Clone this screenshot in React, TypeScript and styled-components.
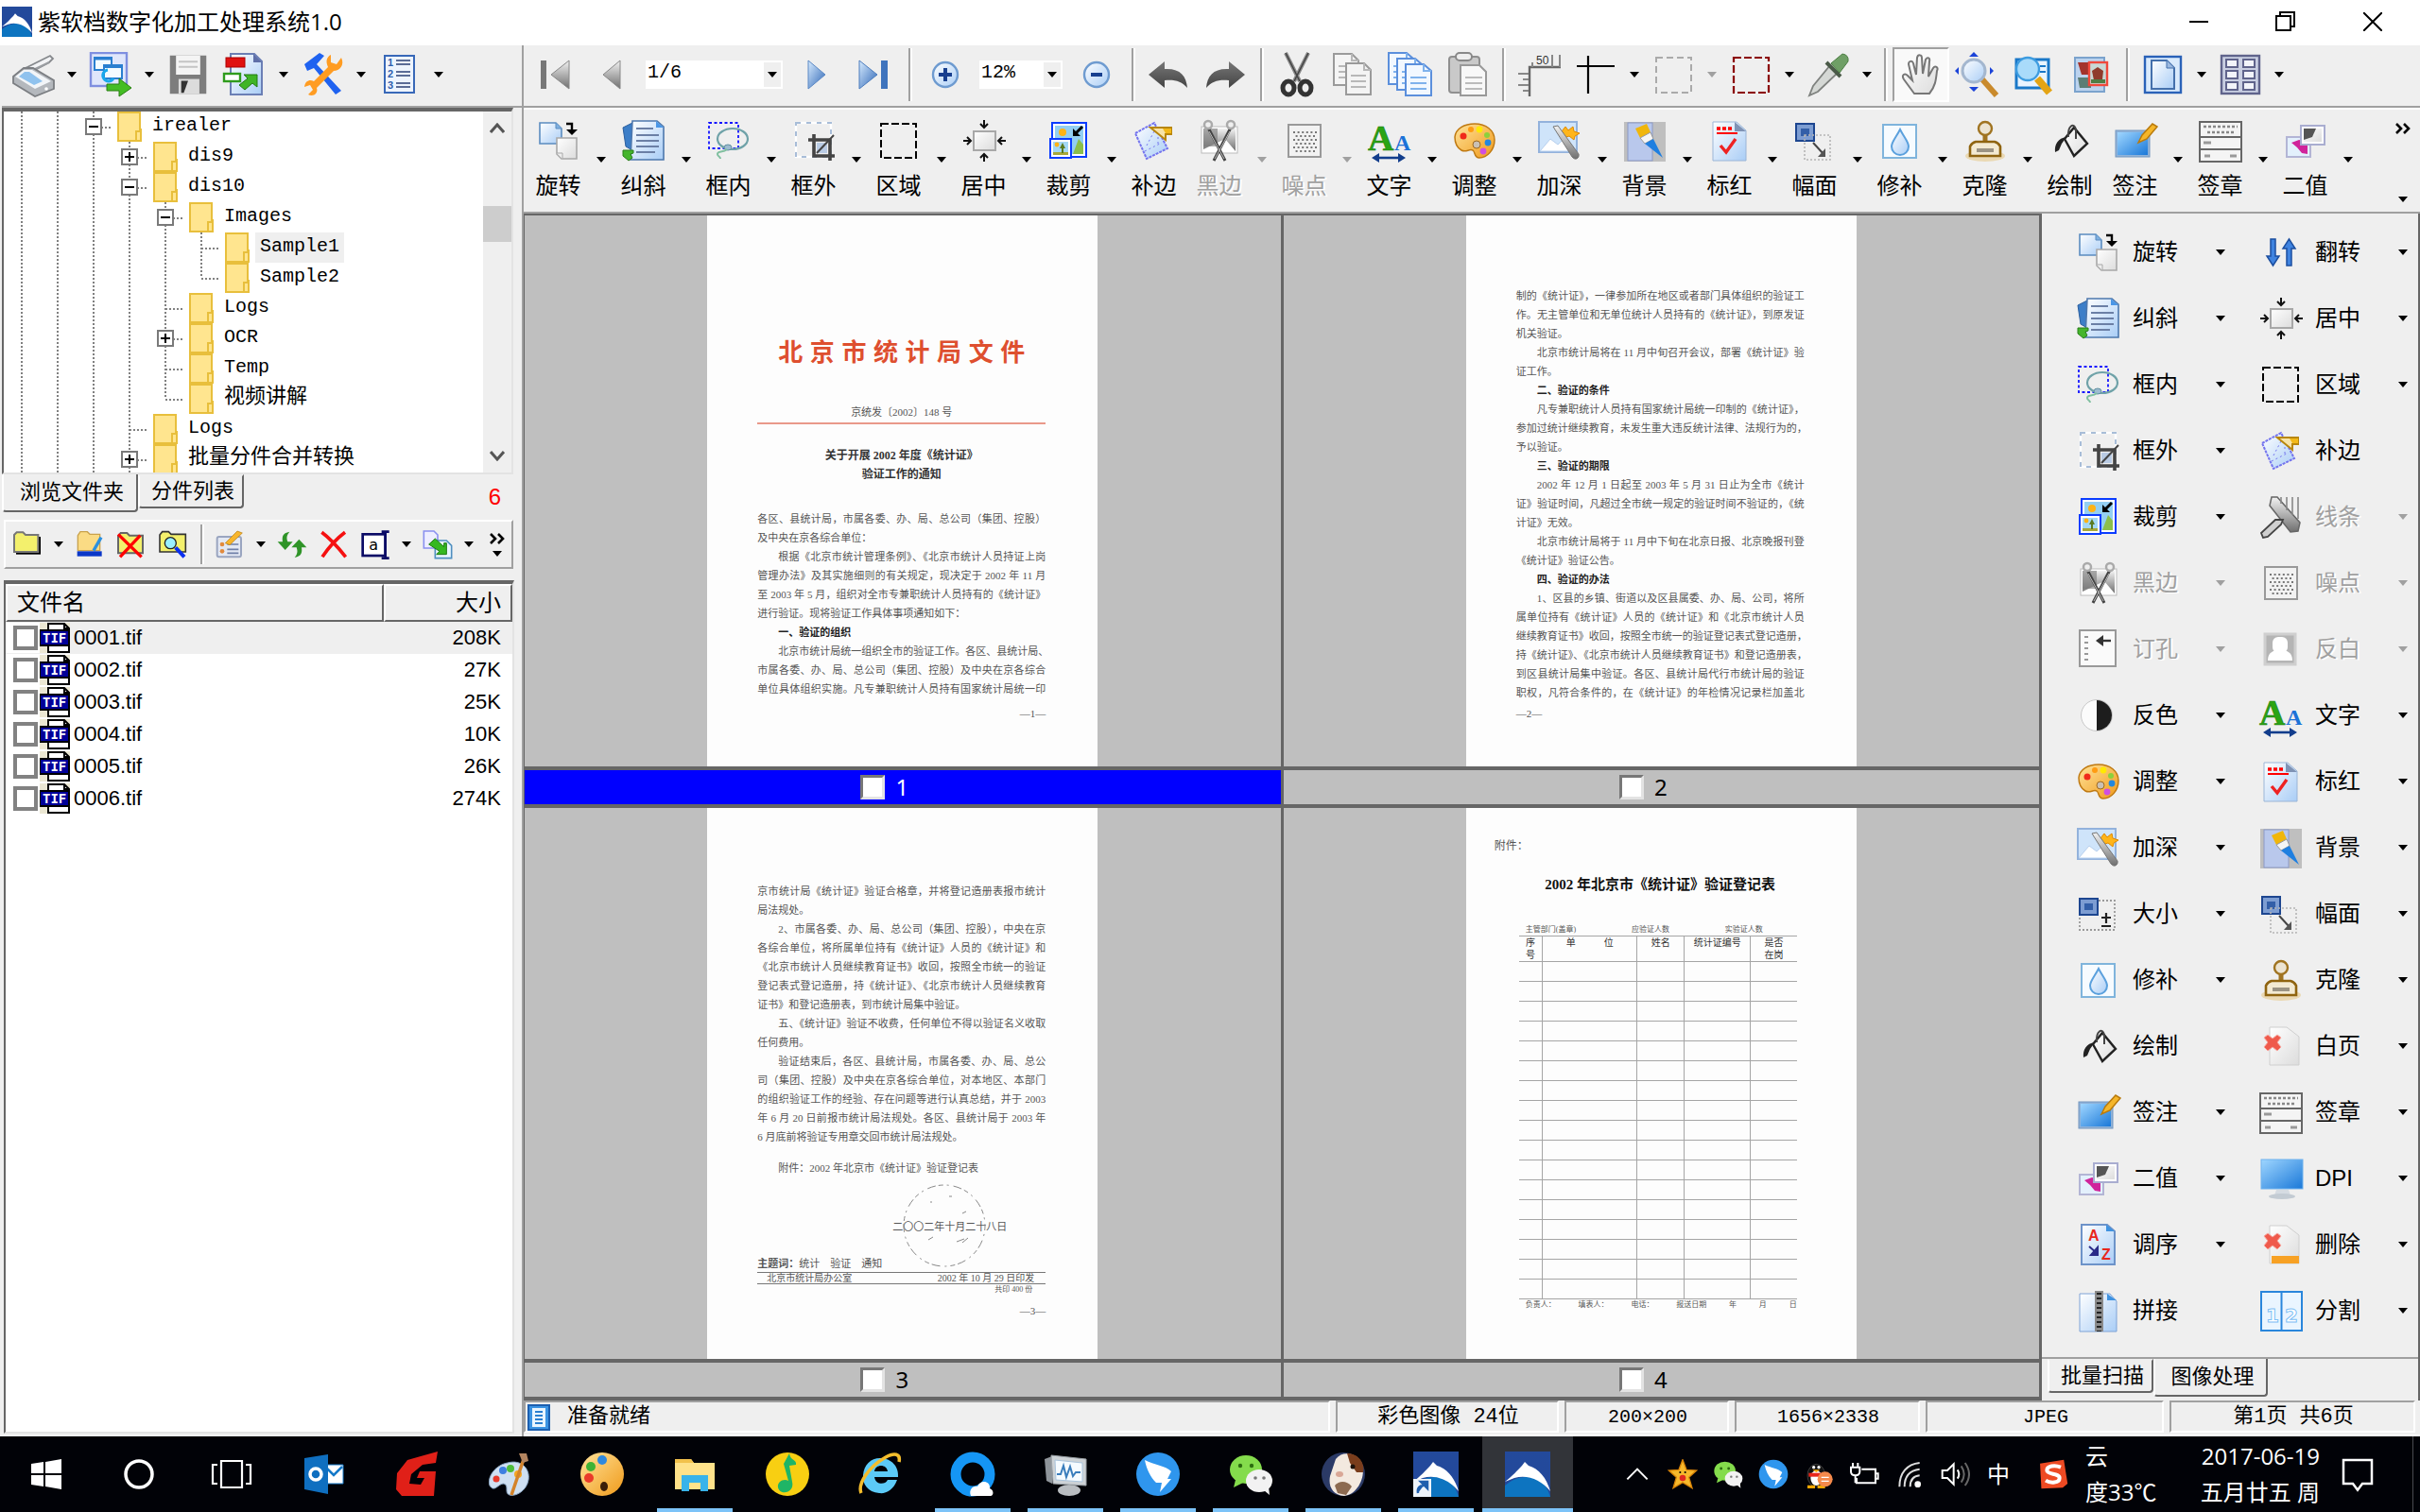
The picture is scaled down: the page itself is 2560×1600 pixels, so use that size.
import React from "react";
import styled, { createGlobalStyle, css } from "styled-components";

const UI = `"Liberation Sans", "Noto Sans CJK SC", sans-serif`;
const MONO = `"Liberation Mono", "Noto Sans CJK SC", monospace`;
const SERIF = `"Liberation Serif", "Noto Sans CJK SC", serif`;
const SEGOE = `"Open Sans", "Noto Sans CJK SC", sans-serif`;

const face = "#efefef";
const shade = "#a0a0a0";
const dark = "#666666";

const GlobalStyle = createGlobalStyle`
  * { box-sizing: border-box; }
  body { margin: 0; background: ${face}; color: #000; font-family: ${UI}; overflow: hidden; }
  button, select, input { font-family: inherit; color: inherit; margin: 0; }
  svg { display: block; flex: none; }
`;

/* ---------- shell ---------- */

const Shell = styled.div`
  height: 100vh;
  display: flex;
  flex-direction: column;
`;

const TitleBar = styled.header`
  flex: none;
  height: 48px;
  background: #fff;
  display: flex;
  align-items: center;
  padding: 0 4px 2px 2px;
`;

const Title = styled.h1`
  margin: 0 0 0 6px;
  flex: 1;
  font: 400 24px/32px ${SEGOE};
`;

const PlainButton = styled.button`
  border: 0;
  padding: 0;
  background: transparent;
  display: flex;
  align-items: center;
  justify-content: center;
  flex: none;
`;

const CaptionButton = styled(PlainButton)`
  width: 92px;
  height: 44px;
`;

const Main = styled.main`
  flex: 1;
  min-height: 0;
  display: flex;
`;

const LeftPane = styled.aside`
  width: 552px;
  flex: none;
  display: flex;
  flex-direction: column;
  padding-left: 2px;
  min-height: 0;
`;

const WorkPane = styled.section`
  flex: 1;
  min-width: 0;
  display: flex;
  flex-direction: column;
  border-left: 2px solid ${shade};
`;

/* ---------- toolbars ---------- */

const ToolBar = styled.div`
  flex: none;
  display: flex;
  align-items: center;
  height: 66px;
  padding: 0 0 2px 3px;
  border-bottom: 2px solid ${shade};
`;

const ToolButton = styled(PlainButton)<{ $w?: number }>`
  width: ${(p) => p.$w ?? 60}px;
  height: 58px;
  &[aria-pressed="true"] {
    background: #f9f9f9;
    border: 2px solid #fff;
    border-top-color: ${shade};
    border-left-color: ${shade};
  }
`;

const DropButton = styled(PlainButton)`
  width: 22px;
  height: 30px;
`;

const Divider = styled.span`
  flex: none;
  width: 2px;
  height: 56px;
  margin: 0 7px;
  background: ${shade};
  box-shadow: 2px 0 #fff;
`;

const Combo = styled.label<{ $w: number }>`
  width: ${(p) => p.$w}px;
  height: 30px;
  margin: 0 6px;
  background: #fff;
  display: flex;
  align-items: center;
  flex: none;
  padding-right: 2px;
`;

const ComboSelect = styled.select`
  appearance: none;
  border: 0;
  background: transparent;
  flex: 1;
  min-width: 0;
  height: 30px;
  padding: 0 2px 4px;
  font: 20px/22px ${MONO};
`;

const ComboArrow = styled.span`
  width: 18px;
  height: 26px;
  background: ${face};
  display: grid;
  place-items: center;
`;

const BigBar = styled.div`
  flex: none;
  height: 110px;
  display: flex;
  border-top: 2px solid #fff;
  padding: 9px 0 0 2px;
`;

const BigItem = styled.div`
  display: flex;
  flex: none;
`;

const disabledText = css`
  color: #a0a0a0;
  text-shadow: 2px 1px #fff;
`;

const BigButton = styled(PlainButton)`
  width: 69px;
  height: 88px;
  flex-direction: column;
  justify-content: flex-start;
  gap: 8px;
  font: 24px/32px ${UI};
  &:disabled { ${disabledText} }
`;

const BigDrop = styled(DropButton)`
  width: 21px;
  height: 88px;
`;

const More = styled(PlainButton)`
  margin-left: auto;
  width: 36px;
  height: 94px;
  flex-direction: column;
  justify-content: space-between;
  padding: 5px 0;
`;

/* ---------- folder tree ---------- */

const Sunken = styled.div`
  border: 2px solid ${dark};
  border-right-color: #e3e3e3;
  border-bottom-color: #e3e3e3;
  background: #fff;
`;

const TreeBox = styled(Sunken)`
  flex: none;
  height: 388px;
  margin-right: 9px;
  display: flex;
  overflow: hidden;
  border-top-width: 4px;
`;

const Tree = styled.ul`
  flex: 1;
  margin: 0;
  padding: 0;
  list-style: none;
`;

const TreeRow = styled.li`
  display: flex;
  height: 32px;
`;

const vDots = "repeating-linear-gradient(180deg, #808080 0 2px, transparent 2px 4px)";
const hDots = "repeating-linear-gradient(90deg, #808080 0 2px, transparent 2px 4px)";

const Guide = styled.span<{ $kind: string }>`
  width: 38px;
  height: 32px;
  flex: none;
  display: grid;
  place-items: center;
  background-image: ${vDots}, ${(p) => (p.$kind === "v" ? "none" : hDots)};
  background-repeat: no-repeat;
  background-size: 2px ${(p) => (p.$kind === "l" ? "16px" : "32px")}, 19px 2px;
  background-position: 18px 0, 19px 16px;
`;

const Expander = styled(PlainButton)`
  width: 18px;
  height: 18px;
  background: #fff;
  border: 2px solid #7a7a7a;
`;

const FolderSlot = styled.span`
  width: 38px;
  flex: none;
  display: grid;
  place-items: center;
`;

const NodeLabel = styled.span<{ $selected?: boolean; $cjk?: boolean }>`
  padding: 0 5px;
  font: ${(p) => (p.$cjk ? 22 : 20)}px/30px ${MONO};
  height: 32px;
  background: ${(p) => (p.$selected ? face : "transparent")};
`;

const ScrollTrack = styled.div`
  width: 30px;
  background: ${face};
  display: flex;
  flex-direction: column;
  align-items: center;
  padding: 12px 0;
`;

const ScrollThumb = styled.div`
  width: 30px;
  height: 38px;
  margin: 76px 0 auto;
  background: #cdcdcd;
`;

/* ---------- tabs ---------- */

const TabStrip = styled.div<{ $right?: boolean }>`
  flex: none;
  display: flex;
  align-items: flex-start;
  height: ${(p) => (p.$right ? 44 : 48)}px;
  padding-left: ${(p) => (p.$right ? 6 : 0)}px;
`;

const Tab = styled.button<{ $active?: boolean; $w: number }>`
  width: ${(p) => p.$w}px;
  height: ${(p) => (p.$active ? 40 : 36)}px;
  padding: 0 0 0 4px;
  font: 22px/32px ${UI};
  background: ${face};
  border: 2px solid #fff;
  border-top: ${(p) => (p.$active ? "0" : `2px solid ${face}`)};
  border-right-color: ${dark};
  border-bottom-color: ${dark};
  border-radius: 0 0 4px 4px;
`;

const TabCount = styled.output`
  margin: 8px 22px 0 auto;
  color: #ff0000;
  font: 24px/32px ${UI};
`;

/* ---------- file list ---------- */

const FileBar = styled.div`
  flex: none;
  display: flex;
  align-items: center;
  height: 52px;
  margin: 0 9px 12px 2px;
  padding-left: 1px;
  border: 2px solid #fff;
  border-right-color: ${shade};
  border-bottom-color: ${shade};
`;

const FileButton = styled(ToolButton)`
  height: 46px;
`;

const FileDivider = styled(Divider)`
  height: 42px;
`;

const FileMore = styled(PlainButton)`
  width: 30px;
  height: 40px;
  margin-left: auto;
  flex-direction: column;
  gap: 7px;
`;

const FileBox = styled(Sunken)`
  flex: 1;
  min-height: 0;
  margin: 0 8px 3px 2px;
  border-top-width: 4px;
`;

const FileTable = styled.table`
  width: 100%;
  border-collapse: separate;
  border-spacing: 0;
  table-layout: fixed;
  font: 22px/32px ${UI};
`;

const HeadCell = styled.th<{ $right?: boolean }>`
  width: ${(p) => (p.$right ? "136px" : "auto")};
  height: 40px;
  padding: 0 10px;
  font: 400 24px/32px ${UI};
  text-align: ${(p) => (p.$right ? "right" : "left")};
  background: ${face};
  border: 2px solid ${dark};
  border-top-color: #fff;
  border-left-color: #fff;
`;

const FileRow = styled.tr<{ $selected?: boolean }>`
  background: ${(p) => (p.$selected ? face : "#fff")};
`;

const NameCell = styled.td`
  height: 34px;
  padding: 0;
`;

const SizeCell = styled.td`
  padding: 0 12px 0 0;
  text-align: right;
`;

const FileLabel = styled.label`
  display: flex;
  align-items: center;
  padding-left: 8px;
  background: linear-gradient(90deg, #fff 0 68px, transparent 68px);
`;

const FileCheck = styled.input`
  appearance: none;
  width: 26px;
  height: 26px;
  border: 4px solid #828282;
  background: #fff;
  margin-right: 2px;
  flex: none;
`;

const FileName = styled.span`
  margin-left: 4px;
`;

/* ---------- thumbnails ---------- */

const Center = styled.div`
  flex: 1;
  min-height: 0;
  display: flex;
  border-top: 2px solid ${shade};
`;

const Viewer = styled.div`
  flex: 1;
  min-width: 0;
  display: grid;
  grid-template-columns: 1fr 1fr;
  grid-template-rows: 1fr 1fr;
  column-gap: 3px;
  background: ${dark};
  border-top: 2px solid ${dark};
  border-right: 3px solid ${dark};
  border-left: 1px solid ${dark};
`;

const Thumb = styled.figure`
  margin: 0;
  min-height: 0;
  display: flex;
  flex-direction: column;
`;

const ThumbStage = styled.div`
  flex: 1;
  min-height: 0;
  background: #bfbfbf;
  display: flex;
  justify-content: center;
`;

const ThumbCaption = styled.figcaption<{ $active?: boolean }>`
  flex: none;
  height: 44px;
  border: 4px solid ${dark};
  border-width: 4px 0;
  background: ${(p) => (p.$active ? "#0000ff" : "#bfbfbf")};
  color: ${(p) => (p.$active ? "#fff" : "#000")};
  display: flex;
  justify-content: center;
  font: 24px/36px "Noto Sans", sans-serif;
`;

const ThumbLabel = styled.label`
  display: flex;
  align-items: center;
  gap: 11px;
  padding-right: 38px;
`;

const ThumbCheck = styled.input`
  appearance: none;
  width: 26px;
  height: 26px;
  background: #fff;
  border: 3px solid #e3e3e3;
  border-top-color: #777;
  border-left-color: #777;
`;

const Sheet = styled.article<{ $top: number }>`
  height: 100%;
  aspect-ratio: 1656 / 2338;
  background: #fdfdfd;
  padding: ${(p) => p.$top}px 55px 0 53px;
  overflow: hidden;
  color: #555;
  font: 11px/20px ${SERIF};
`;

const Line = styled.p<{ $indent?: boolean; $full?: boolean; $bold?: boolean }>`
  margin: 0;
  height: 20px;
  white-space: nowrap;
  padding-left: ${(p) => (p.$indent ? 22 : 0)}px;
  font-weight: ${(p) => (p.$bold ? 700 : 400)};
  color: ${(p) => (p.$bold ? "#222" : "inherit")};
  text-align-last: ${(p) => (p.$full ? "justify" : "left")};
`;

const RedTitle = styled.h2`
  margin: 0 22px 32px;
  color: #de4f2f;
  font: 700 26px/40px ${SERIF};
  text-align-last: justify;
`;

const DocNumber = styled.p`
  margin: 0;
  padding-bottom: 1px;
  text-align: center;
  border-bottom: 2px solid #e9998a;
`;

const DocHeading = styled.h3`
  margin: 23px 0 27px;
  color: #333;
  font: 700 12px/20px ${SERIF};
  text-align: center;
`;

const PageNo = styled.p<{ $left?: boolean }>`
  margin: ${(p) => (p.$left ? 2 : 6)}px 0 0;
  text-align: ${(p) => (p.$left ? "left" : "right")};
`;

const Attachment = styled.p`
  margin: 13px 0 0 22px;
`;

const Signed = styled.div`
  position: relative;
  height: 62px;
  padding: 42px 41px 0 0;
  text-align: right;
`;

const Seal = styled.svg`
  position: absolute;
  top: 6px;
  right: 62px;
`;

const Keywords = styled.p`
  margin: 20px 0 0;
  line-height: 18px;
  white-space: pre;
`;

const Imprint = styled.div`
  display: flex;
  justify-content: space-between;
  padding: 0 12px 0 10px;
  border: 1px solid #777;
  border-width: 1px 0;
  font-size: 10px;
  line-height: 11px;
`;

const Copies = styled.p`
  margin: 0 14px;
  font-size: 8px;
  line-height: 12px;
  text-align: right;
`;

const FormLabel = styled.p`
  margin: 0 0 0 -23px;
  font-size: 12px;
`;

const FormTitle = styled.h2`
  margin: 19px 0 30px;
  text-align: center;
  white-space: nowrap;
  color: #111;
  font: 700 15px/24px ${SERIF};
`;

const FormLine = styled.div<{ $end: number }>`
  display: flex;
  justify-content: space-between;
  margin: 0 ${(p) => p.$end}px 0 10px;
  font-size: 8px;
  line-height: 12px;
  white-space: nowrap;
`;

const FormTable = styled.table`
  width: 294px;
  margin-left: 3px;
  border-collapse: collapse;
  table-layout: fixed;
  text-align: center;
  font-size: 10px;
  line-height: 13px;
  color: #333;
  td, th { padding: 0; height: 21px; border: 1px solid #a5a5a5; font-weight: 400; vertical-align: top; }
  th { height: 27px; }
  td:first-child, th:first-child { border-left: 0; }
  td:last-child, th:last-child { border-right: 0; }
`;

/* ---------- processing panel ---------- */

const SidePanel = styled.aside`
  width: 400px;
  flex: none;
  display: flex;
  flex-direction: column;
  border-right: 2px solid ${dark};
`;

const ToolGrid = styled.div`
  flex: 1;
  display: grid;
  grid-template-columns: 193px 1fr;
  grid-auto-rows: 70px;
  padding: 6px 0 0 36px;
  border-bottom: 2px solid ${shade};
`;

const SideItem = styled.div`
  display: flex;
  align-items: center;
`;

const SideButton = styled(PlainButton)`
  width: 142px;
  height: 60px;
  gap: 12px;
  justify-content: flex-start;
  font: 24px/32px ${UI};
  &:disabled { ${disabledText} }
`;

/* ---------- status bar ---------- */

const StatusBar = styled.footer`
  flex: none;
  display: flex;
  gap: 6px;
  height: 38px;
  padding: 0 5px 2px 0;
  border-bottom: 2px solid #fff;
`;

const StatusCell = styled.div<{ $w?: number; $cjk?: boolean }>`
  ${(p) => (p.$w ? `width: ${p.$w}px; justify-content: center; padding-left: 2px;` : "flex: 1; gap: 18px; padding-left: 2px;")}
  display: flex;
  align-items: center;
  padding-top: 2px;
  white-space: pre;
  font: ${(p) => (p.$cjk ? 22 : 20)}px/30px ${MONO};
  border: 2px solid #fff;
  border-top-color: ${shade};
  border-left-color: ${shade};
`;

/* ---------- taskbar ---------- */

const TaskBar = styled.nav`
  flex: none;
  height: 80px;
  background: #010207;
  color: #fff;
  display: flex;
  align-items: stretch;
`;

const running = "linear-gradient(#7cc3f8, #7cc3f8)";

const TaskButton = styled(PlainButton)<{ $open?: boolean; $active?: boolean }>`
  width: ${(p) => (p.$active ? 96 : 98)}px;
  background: ${(p) => (p.$open || p.$active ? running : "none")} no-repeat bottom;
  background-size: ${(p) => (p.$active ? "100%" : "80px")} 4px;
  background-color: ${(p) => (p.$active ? "#323439" : "transparent")};
`;

const Tray = styled.div`
  margin-left: auto;
  display: flex;
  align-items: center;
`;

const TrayButton = styled(PlainButton)`
  width: 48px;
  height: 80px;
`;

const TrayText = styled.div<{ $w: number; $right?: boolean }>`
  width: ${(p) => p.$w}px;
  padding: ${(p) => (p.$right ? "0 16px 0 0" : "0 0 0 10px")};
  text-align: ${(p) => (p.$right ? "right" : "left")};
  white-space: nowrap;
  font: 24px/38px ${SEGOE};
`;

const ShowDesktop = styled.span`
  width: 8px;
  height: 80px;
  margin-left: 34px;
  border-left: 1px solid #4a4b50;
`;

/* ---------- drawings ---------- */

const HiddenSvg = styled.svg`
  position: absolute;
`;

const Defs = () => (
  <HiddenSvg width="0" height="0" aria-hidden="true">
    <defs>
      <linearGradient id="ice" x1="0" y1="0" x2="1" y2="1"><stop offset="0" stopColor="#fff" /><stop offset="1" stopColor="#a9cdf6" /></linearGradient>
      <linearGradient id="sky" x1="0" y1="0" x2="1" y2="1"><stop offset="0" stopColor="#9fd6ff" /><stop offset="1" stopColor="#1a78d8" /></linearGradient>
      <linearGradient id="steel" x1="0" y1="0" x2="0" y2="1"><stop offset="0" stopColor="#f2f2f2" /><stop offset="1" stopColor="#6f6f6f" /></linearGradient>
      <linearGradient id="navy" x1="0" y1="0" x2="1" y2="1"><stop offset="0" stopColor="#d8ecff" /><stop offset="1" stopColor="#2d65b5" /></linearGradient>
      <linearGradient id="paper" x1="0" y1="0" x2="1" y2="1"><stop offset="0" stopColor="#fff" /><stop offset="1" stopColor="#dcdcdc" /></linearGradient>
      <linearGradient id="gold" x1="0" y1="0" x2="1" y2="1"><stop offset="0" stopColor="#ffe39a" /><stop offset="1" stopColor="#f09a1a" /></linearGradient>
      <linearGradient id="ink" x1="0" y1="0" x2="0" y2="1"><stop offset="0" stopColor="#777" /><stop offset="1" stopColor="#444" /></linearGradient>
      <linearGradient id="logo" x1="0" y1="0" x2="0" y2="1"><stop offset="0" stopColor="#234a9b" /><stop offset="1" stopColor="#23479b" /></linearGradient>
    </defs>
  </HiddenSvg>
);

const ArrowMark = ({ off }: { off?: boolean }) => (
  <svg width="10" height="6" viewBox="0 0 10 6" aria-hidden="true"><path d="M0 0H10L5 6Z" fill={off ? "#a0a0a0" : "#000"} /></svg>
);

const Chevrons = () => (
  <svg width="16" height="12" viewBox="0 0 16 12" fill="none" stroke="#000" strokeWidth="2.6" aria-hidden="true"><path d="M1 1l5 5-5 5M9 1l5 5-5 5" /></svg>
);

const paletteArt = (
  <>
    <path d="M24 6c12 0 21 7 21 17 0 11-8 19-16 19-6 0-4-6-7-8-4-2-7 3-12 0C5 31 3 26 3 20 4 11 13 6 24 6Z" fill="url(#gold)" stroke="#c07a12" strokeWidth="1.5" />
    <circle cx="26" cy="28" r="4" fill="#c9c0b5" stroke="#a06a20" />
    <circle cx="12" cy="19" r="3.5" fill="#f02a1a" /><circle cx="20" cy="12" r="3" fill="#ff9b12" /><circle cx="29" cy="12" r="3.4" fill="#ffe900" />
    <circle cx="37" cy="18" r="3" fill="#8bd13c" /><circle cx="38" cy="26" r="3.4" fill="#2387dd" /><circle cx="33" cy="35" r="3.4" fill="#cf4fe0" />
  </>
);

const crumpled = (
  <path d="M12 4H30L43 14V44H12Z" fill="url(#paper)" stroke="#cfcfcf" />
);

const redCross = <path d="M6 15l4-3 5 4 5-4 4 3-4 5 4 5-4 4-5-4-5 4-4-4 4-5Z" fill="#ef5a4c" stroke="#f7a79f" />;

const scissorsPhoto = (
  <>
    <rect x="5" y="9" width="38" height="28" fill="#fff" stroke="#bbb" />
    <path d="M7 11H41V35L30 22 7 33Z" fill="url(#steel)" />
    <path d="M7 11H22V30H7Z" fill="#777" opacity=".6" />
    <path d="M12 10L30 45M36 10L18 45" stroke="#444" strokeWidth="3" />
    <path d="M13 14L29 43M35 14L19 43" stroke="#bbb" strokeWidth="1" />
    <circle cx="12" cy="7" r="4" fill="#efefef" stroke="#aaa" strokeWidth="2.5" /><circle cx="36" cy="7" r="4" fill="#efefef" stroke="#aaa" strokeWidth="2.5" />
  </>
);

const art: Record<string, React.ReactNode> = {
  rotate: (
    <>
      <path d="M4 5H21L27 11V27H4Z" fill="url(#ice)" stroke="#5b8cc0" strokeWidth="1.6" /><path d="M21 5V11H27" fill="#7fb0e0" stroke="#5b8cc0" />
      <path d="M22 21H43V43H27L22 38Z" fill="url(#paper)" stroke="#a8a8a8" strokeWidth="1.6" /><path d="M22 37H28V43" fill="#eee" stroke="#a8a8a8" />
      <path d="M32 6H38V14" fill="none" stroke="#000" strokeWidth="2.4" /><path d="M32 12H44L38 18Z" />
    </>
  ),
  deskew: (
    <>
      <path d="M2 10L14 4 12 34 5 30Z" fill="#3c7ec8" stroke="#2a5e9e" />
      <path d="M12 3H38L45 9V44H10Z" fill="url(#ice)" stroke="#4e78ad" strokeWidth="1.6" /><path d="M37 3V10H45" fill="#4a96e6" />
      <path d="M16 11H34M16 18H40M16 24H40M16 30H40M16 36H36" stroke="#6b7fa5" strokeWidth="2" />
      <path d="M2 34H13V37L10 38 12 42 8 45 2 40Z" fill="#45b52c" stroke="#2a7f1b" />
    </>
  ),
  boxin: (
    <>
      <rect x="3" y="5" width="31" height="27" fill="none" stroke="#1414ff" strokeWidth="1.8" strokeDasharray="3 2.5" />
      <ellipse cx="28" cy="22" rx="16" ry="11" fill="none" stroke="#6fa2a8" strokeWidth="2.2" />
      <ellipse cx="23" cy="31" rx="4" ry="3" fill="#9dbbd0" stroke="#5f8fa0" /><path d="M22 33c-4 4-10 1-10 5 0 3 3 2 3 5" fill="none" stroke="#7fbf9f" strokeWidth="2" />
    </>
  ),
  boxout: (
    <>
      <rect x="5" y="5" width="37" height="36" fill="none" stroke="#fff" strokeWidth="2.4" /><rect x="5" y="5" width="37" height="36" fill="none" stroke="#a8bdd8" strokeWidth="2" strokeDasharray="5 6" />
      <path d="M18 23H41V45M24 17V40H46" fill="none" stroke="#444" strokeWidth="3.6" /><path d="M27 26H38V37H27Z" fill="#b9cbe4" /><path d="M27 37L45 18" stroke="#444" strokeWidth="2" />
    </>
  ),
  region: <rect x="5" y="6" width="37" height="36" fill="none" stroke="#000" strokeWidth="2" strokeDasharray="8 3" />,
  center: (
    <>
      <rect x="13" y="14" width="23" height="20" fill="url(#paper)" stroke="#a8a8a8" strokeWidth="2" />
      <path d="M24 2V9M20 6l4 4 4-4M24 46V39M20 42l4-4 4 4M2 24H9M6 20l4 4-4 4M47 24H40M43 20l-4 4 4 4" fill="none" stroke="#111" strokeWidth="2" />
    </>
  ),
  crop: (
    <>
      <rect x="6" y="5" width="36" height="36" fill="#fff" stroke="#0a3cff" strokeWidth="2" /><rect x="9" y="8" width="30" height="30" fill="#93cff2" />
      <circle cx="17" cy="15" r="4" fill="#ffb316" /><path d="M28 38L34 22l5 6V38Z" fill="#8cbf4a" />
      <rect x="4" y="22" width="22" height="20" fill="#fff" stroke="#0a3cff" strokeWidth="2" /><rect x="7" y="25" width="16" height="14" fill="#a4d8f5" /><circle cx="11" cy="28" r="2.4" fill="#ffb316" /><path d="M7 36H23V39H7Z" fill="#a8a83a" /><path d="M17 26l3 6H18V37H16V32H14Z" fill="#5a7a20" />
      <path d="M38 9L31 16" stroke="#000" strokeWidth="3" /><path d="M28 11V19H36Z" />
    </>
  ),
  patch: (
    <>
      <path d="M4 16L24 5 38 32 16 43Z" fill="url(#ice)" stroke="#7474ee" strokeWidth="2" strokeDasharray="3 1" />
      <path d="M14 35L32 26M16 29L25 12M28 20V30" stroke="#7474ee" strokeDasharray="2 3" />
      <path d="M20 10H42V17H36V23Z" fill="#f7e3a8" stroke="#b8860b" strokeWidth="2" /><path d="M33 11H42V16H36Z" fill="#f2b818" />
    </>
  ),
  blackedge: scissorsPhoto,
  noise: (
    <>
      <rect x="7" y="7" width="34" height="34" fill="#f2f2f2" stroke="#999" strokeWidth="2" />
      {[0, 1, 2, 3, 4, 5].map((i) => <path key={i} d={`M12 ${15 + i * 4}H37`} stroke="#777" strokeWidth="2" strokeDasharray="2 2.6" strokeDashoffset={i % 2 ? 2 : 0} />)}
    </>
  ),
  text: (
    <>
      <text x="29" y="34" fontFamily="Liberation Serif, serif" fontWeight="700" fontSize="24" fill="#1c72d8">A</text>
      <text x="1" y="34" fontFamily="Liberation Serif, serif" fontWeight="700" fontSize="38" fill="#2aa514" stroke="#1b7a0c" strokeWidth=".6">A</text>
      <path d="M10 42H36" stroke="#123d8c" strokeWidth="2.6" /><path d="M5 42l8-5v10ZM41 42l-8-5v10Z" fill="#123d8c" />
    </>
  ),
  adjust: paletteArt,
  deepen: (
    <>
      <rect x="2" y="4" width="40" height="32" fill="#cfe4fa" stroke="#93b2dc" strokeWidth="2" /><path d="M3 35L14 22 22 28 30 20 41 35Z" fill="#fff" stroke="#b7d0ee" />
      <path d="M26 14l4-5 3 4 5-4 1 5 6 2-5 3-1 4-5-4-6 2Z" fill="#ffb51a" stroke="#e08a00" />
      <path d="M17 9l5-1L44 38c1 5-4 7-7 3Z" fill="url(#steel)" stroke="#777" />
    </>
  ),
  bg: (
    <>
      <rect x="2" y="4" width="44" height="42" fill="#bfbfbf" /><rect x="6" y="5" width="26" height="40" fill="#b9c8ec" stroke="#8c9ac6" />
      <path d="M14 11L26 6 30 15 19 21Z" fill="#f0b60c" /><path d="M19 21L30 15 33 22 24 27Z" fill="#f5f5f5" stroke="#999" /><path d="M24 27L33 22 43 42Z" fill="#1f7fe0" />
    </>
  ),
  red: (
    <>
      <path d="M6 4H31L41 13V45H6Z" fill="url(#ice)" stroke="#9bb5d6" /><path d="M29 4V14H41Z" fill="#7f93b5" />
      <path d="M10 11H27" stroke="#f00" strokeWidth="3.4" strokeDasharray="4 2" /><path d="M10 16H32" stroke="#f00" strokeWidth="2" /><path d="M14 29L20 36 30 22" fill="none" stroke="#e22" strokeWidth="3.4" />
    </>
  ),
  page: (
    <>
      <rect x="4" y="6" width="19" height="18" fill="#7d9dd2" stroke="#1d4690" strokeWidth="2" /><rect x="9" y="11" width="9" height="8" fill="#335fa8" />
      <rect x="13" y="18" width="27" height="26" fill="none" stroke="#b5b5b5" strokeWidth="1.6" strokeDasharray="2 2" /><path d="M22 26L33 38" stroke="#444" strokeWidth="2" /><path d="M35 32V41H27Z" fill="#555" />
    </>
  ),
  sizepm: (
    <>
      <rect x="4" y="10" width="37" height="31" fill="none" stroke="#999" strokeWidth="1.8" strokeDasharray="2 2" />
      <rect x="4" y="8" width="19" height="17" fill="#7d9dd2" stroke="#1d4690" strokeWidth="2" /><rect x="9" y="13" width="9" height="7" fill="#335fa8" />
      <path d="M32 23V34M27 28H37M27 37H37" stroke="#222" strokeWidth="2.2" />
    </>
  ),
  fix: (
    <>
      <rect x="6" y="7" width="35" height="35" fill="#f6fbff" stroke="#7fb4dc" strokeWidth="2" />
      <path d="M24 12c4 8 9 13 9 18a9 9 0 0 1-18 0c0-5 5-10 9-18Z" fill="url(#ice)" stroke="#5aa0dd" strokeWidth="2" />
    </>
  ),
  clone: (
    <>
      <ellipse cx="24" cy="40" rx="21" ry="6" fill="#ead9b4" /><circle cx="24" cy="11" r="7" fill="#ece4d2" stroke="#a07421" strokeWidth="2.4" />
      <path d="M24 18V25" stroke="#a07421" strokeWidth="5" /><path d="M8 40V30q2-4 6-5H34q4 1 6 5V40Z" fill="#f3ead2" stroke="#8f6410" strokeWidth="2.6" /><path d="M15 34H33" stroke="#9b9484" strokeWidth="4" />
    </>
  ),
  paint: (
    <>
      <path d="M18 22L28 10 42 27 28 40Z" fill="url(#paper)" stroke="#222" strokeWidth="2.4" /><path d="M22 20c-1-12 6-16 8-8v10" fill="none" stroke="#444" strokeWidth="2" />
      <path d="M20 20c-9 1-13 8-12 16l4-2 3-7Z" fill="#222" />
    </>
  ),
  note: (
    <>
      <rect x="3" y="13" width="36" height="28" fill="#8fb3da" stroke="#7596be" /><rect x="5" y="15" width="32" height="24" fill="url(#sky)" />
      <path d="M27 26l4-8L42 6l5 3L36 22Z" fill="#f5b62a" stroke="#b97a0c" strokeWidth="1.5" />
    </>
  ),
  stamp: (
    <>
      <rect x="2" y="4" width="44" height="42" fill="#f4f4f4" stroke="#666" strokeWidth="2" /><path d="M2 20H46M2 33H46" stroke="#666" strokeWidth="2" />
      <path d="M6 9H42M10 15H40" stroke="#888" strokeWidth="2.4" strokeDasharray="3 2" /><path d="M6 26H14M7 40H13M34 40H41" stroke="#999" strokeWidth="3" />
    </>
  ),
  binary: (
    <>
      <rect x="4" y="20" width="25" height="21" fill="#e3f0fc" stroke="#b3b5d5" strokeWidth="2" /><path d="M9 26l8-3 9 2v13l-6-1-5-6Z" fill="#d0249b" />
      <rect x="19" y="8" width="25" height="20" fill="#fff" stroke="#a9add0" strokeWidth="2" /><rect x="22" y="11" width="19" height="14" fill="url(#paper)" /><path d="M22 11H35L31 20 22 23Z" fill="#555" />
    </>
  ),
  flip: <path d="M18 10V28H22L15.500 38 9 28H13V10ZM30 38V20H26L32.500 10 39 20H35V38Z" fill="#3f83e0" stroke="#1c4fa0" strokeWidth="1.5" />,
  lines: (
    <>
      <path d="M14 3H20L44 30 42 39 34 40 12 12Z" fill="url(#steel)" stroke="#666" strokeWidth="1.5" /><path d="M24 3V10M30 3V17M36 3V22M42 3V26" stroke="#888" strokeWidth="1.6" />
      <path d="M26 27L18 27 3 41 5 46 10 45 24 32Z" fill="#d0d0d0" stroke="#444" strokeWidth="1.8" />
    </>
  ),
  punch: (
    <>
      <rect x="4" y="4" width="38" height="38" fill="#fafafa" stroke="#999" strokeWidth="2" /><path d="M11 10V38" stroke="#999" strokeWidth="4" strokeDasharray="2 4" /><path d="M37 15H24" stroke="#333" strokeWidth="2.4" /><path d="M29 9V21L21 15Z" fill="#333" />
    </>
  ),
  white: (
    <>
      <rect x="7" y="8" width="32" height="32" fill="#b5b5b5" stroke="#cfcfcf" strokeWidth="3" /><rect x="15" y="11" width="16" height="17" rx="6" fill="#fff" /><path d="M10 36c0-9 6-11 13-11s13 2 13 11Z" fill="#fff" />
    </>
  ),
  invert: (
    <>
      <circle cx="22" cy="24" r="16.500" fill="#fbfbfb" stroke="#c8c8c8" /><path d="M22 8a16 16 0 0 1 0 32Z" fill="#1d1d1d" />
    </>
  ),
  blank: <>{crumpled}{redCross}</>,
  remove: <>{crumpled}<path d="M14 36H43V44H14Z" fill="#f7a124" />{redCross}</>,
  dpi: (
    <>
      <rect x="3" y="4" width="44" height="31" fill="url(#sky)" stroke="#6fb2ee" /><path d="M19 36H32L34 42H17Z" fill="#d5dbe2" /><ellipse cx="25" cy="43" rx="14" ry="3" fill="#c3cbd3" />
    </>
  ),
  order: (
    <>
      <path d="M6 3H33L41 10V45H6Z" fill="url(#ice)" stroke="#6d93c9" strokeWidth="2" /><path d="M32 3V10H41Z" fill="#3f92e0" />
      <text x="13" y="20" fontFamily="Liberation Sans, sans-serif" fontWeight="700" fontSize="16" fill="#e8261c">A</text>
      <text x="27" y="40" fontFamily="Liberation Sans, sans-serif" fontWeight="700" fontSize="16" fill="#e8261c">Z</text><path d="M14 26L22 33M23 27V35H16Z" stroke="#2a2a88" strokeWidth="2" fill="#2a2a88" />
    </>
  ),
  join: (
    <>
      <path d="M4 6H36L43 14V46H4Z" fill="url(#ice)" stroke="#7fa3d6" /><path d="M33 6V13H43Z" fill="#3f92e0" />
      <rect x="20" y="3" width="9" height="43" fill="#8a8a8a" /><path d="M24.500 5V46" stroke="#222" strokeWidth="5" strokeDasharray="2 3" />
    </>
  ),
  split: (
    <>
      <rect x="3" y="4" width="43" height="41" fill="#eaf5ff" stroke="#2a86dc" strokeWidth="2" /><path d="M24.500 4V45" stroke="#2a86dc" strokeWidth="2" />
      <text x="8" y="36" fontFamily="DejaVu Sans, sans-serif" fontWeight="700" fontSize="20" fill="#fff" stroke="#7fc0f5">1</text><text x="28" y="36" fontFamily="DejaVu Sans, sans-serif" fontWeight="700" fontSize="20" fill="#fff" stroke="#7fc0f5">2</text>
    </>
  ),

  /* main toolbar */
  scan: (
    <>
      <path d="M18 16L42 4l3 3-4 4-15 8Z" fill="#f2f3f5" stroke="#85888c" strokeWidth="1.8" /><path d="M22 20L41 11" stroke="#9a9da1" strokeWidth="2" />
      <path d="M14 17L3 26V33L26 47 46 39V30L24 17Z" fill="#b4b8bd" stroke="#7b7e82" strokeWidth="1.8" /><path d="M14 19L5 26 26 39 43 31 23 19Z" fill="#f2f5f8" /><path d="M15 21L9 26 25 35 34 31 20 21Z" fill="#8fc2ee" />
      <circle cx="38" cy="39" r="1.800" fill="#fff" />
    </>
  ),
  windows: (
    <>
      <rect x="3" y="1" width="38" height="35" fill="#dfe6fb" stroke="#7f8fe0" strokeWidth="2.4" /><rect x="7" y="6" width="18" height="13" fill="#f4fbff" stroke="#2a7fd0" strokeWidth="2" /><path d="M7 7H25" stroke="#2a7fd0" strokeWidth="3" />
      <rect x="17" y="14" width="19" height="14" fill="#f4fbff" stroke="#2a7fd0" strokeWidth="2" /><path d="M17 15H36" stroke="#2a7fd0" strokeWidth="4" /><path d="M21 19a6 6 0 1 0 6 9" fill="none" stroke="#18a8ec" strokeWidth="3" />
      <path d="M20 34H33V28L46 38 33 47V41H20Z" fill="#44bd24" stroke="#2a7f14" />
    </>
  ),
  save: (
    <>
      <path d="M3 2H45V46H3Z" fill="#7d7d7d" /><rect x="10" y="2" width="28" height="22" fill="#f4f4f4" /><path d="M13 9H35M13 15H35" stroke="#c4c4c4" strokeWidth="2" /><rect x="13" y="29" width="24" height="17" fill="#dcdcdc" /><path d="M16 31H24L19 45H16Z" fill="#333" />
    </>
  ),
  exporter: (
    <>
      <path d="M9 2H34L42 10V45H9Z" fill="url(#ice)" stroke="#6b7fb5" strokeWidth="2" /><path d="M33 2V11H42Z" fill="#5f6fa8" /><rect x="4" y="6" width="20" height="10" fill="#e01212" stroke="#a00" />
      <rect x="2" y="23" width="17" height="8" fill="#fff" stroke="#2f9c1c" strokeWidth="2.4" /><path d="M18 35L27 28 23 24H37V37L32 33 24 40Z" fill="#3fb526" stroke="#237a12" />
    </>
  ),
  tools: (
    <>
      <path d="M5 13L21 1 26 4 18 13 44 41 38 45 15 17 8 20Z" fill="#1f62f0" />
      <path d="M33 3L33 11 39 13 44 6C48 14 42 20 36 20L18 38C20 44 14 48 9 45L14 40 11 35 5 37C6 30 11 29 15 31L30 16C27 9 29 5 33 3Z" fill="#ff9c22" />
    </>
  ),
  list: (
    <>
      <rect x="8" y="4" width="31" height="39" fill="#eef4fd" stroke="#3868b8" strokeWidth="2" />
      {[1, 2, 3].map((n) => <g key={n}><text x="11" y={3 + n * 12} fontFamily="Liberation Sans, sans-serif" fontSize="11" fontWeight="700" fill="#2f5fae">{n}</text><path d={`M20 ${-3 + n * 12}H35M20 ${1 + n * 12}H35`} stroke="#5b6c96" strokeWidth="2" /></g>)}
    </>
  ),
  first: <><rect x="9" y="9" width="6" height="30" fill="#777" /><path d="M39 9V39L20 24Z" fill="url(#steel)" stroke="#888" /></>,
  prev: <path d="M33 9V39L15 24Z" fill="url(#steel)" stroke="#888" />,
  next: <path d="M15 9V39L33 24Z" fill="url(#navy)" stroke="#5b88c4" />,
  last: <><path d="M9 9V39L28 24Z" fill="url(#navy)" stroke="#4d7dbd" /><rect x="32" y="9" width="7" height="30" fill="#3f74bd" /></>,
  zin: <><circle cx="24" cy="24" r="13" fill="url(#ice)" stroke="#6e9bd0" strokeWidth="2.4" /><path d="M24 17V31M17 24H31" stroke="#173f8f" strokeWidth="4" /></>,
  zout: <><circle cx="24" cy="24" r="13" fill="url(#ice)" stroke="#6e9bd0" strokeWidth="2.4" /><path d="M18 24H30" stroke="#173f8f" strokeWidth="4" /></>,
  undo: <path d="M3 24L20 10V18C36 17 43 25 44 38 38 31 31 29 20 30V38Z" fill="url(#ink)" />,
  redo: <path d="M45 24L28 10V18C12 17 5 25 4 38 10 31 17 29 28 30V38Z" fill="url(#ink)" />,
  cut: (
    <>
      <path d="M12 1L27 31M36 1L21 31" stroke="#8b8b8b" strokeWidth="4" /><path d="M12 1L27 31M36 1L21 31" stroke="#444" strokeWidth="1.5" />
      <ellipse cx="15" cy="38" rx="6" ry="7" fill="none" stroke="#333" strokeWidth="5" /><ellipse cx="33" cy="38" rx="6" ry="7" fill="none" stroke="#333" strokeWidth="5" />
    </>
  ),
  copy: (
    <>
      {[0, 1].map((i) => <g key={i} transform={`translate(${i * 13} ${i * 10})`}><path d="M3 2H22L29 9V35H3Z" fill="#f4f4f4" stroke="#9a9a9a" strokeWidth="2" /><path d="M22 2V9H29M8 15H24M8 21H24M8 27H24" fill="none" stroke="#b8b8b8" strokeWidth="2" /></g>)}
    </>
  ),
  copyall: (
    <>
      {[0, 1, 2].map((i) => <g key={i} transform={`translate(${i * 9} ${i * 6})`}><path d="M1 1H20L28 8V34H1Z" fill="#f2f8ff" stroke="#5b8fdc" strokeWidth="2" /><path d="M20 1V8H28M6 15H23M6 21H23M6 27H23" fill="none" stroke="#7fb2ec" strokeWidth="2" /></g>)}
    </>
  ),
  paste: (
    <>
      <rect x="5" y="5" width="32" height="38" rx="3" fill="#c9c9c9" stroke="#8f8f8f" strokeWidth="2" /><rect x="12" y="1" width="17" height="8" rx="4" fill="#eee" stroke="#888" strokeWidth="2" />
      <path d="M17 14H37L44 21V46H17Z" fill="#f8f8f8" stroke="#999" strokeWidth="2" /><path d="M22 27H40M22 33H40M22 39H40" stroke="#bbb" strokeWidth="2" />
    </>
  ),
  ruler: (
    <>
      <path d="M14 47V16H47" fill="none" stroke="#666" strokeWidth="2.4" /><path d="M2 23H13M7 29H13M2 35H13M7 41H13M17 11V16M38 3V16M46 3V16" stroke="#888" strokeWidth="2" /><text x="21" y="13" fontFamily="Liberation Sans, sans-serif" fontSize="12" fill="#333">50</text>
    </>
  ),
  cross: <path d="M16 4V44M4 15H44" stroke="#000" strokeWidth="2.2" />,
  dashoff: <rect x="6" y="6" width="37" height="37" fill="none" stroke="#aaa" strokeWidth="2" strokeDasharray="7 4" />,
  dashred: <rect x="6" y="6" width="37" height="37" fill="none" stroke="#8b0000" strokeWidth="2.2" strokeDasharray="8 3" />,
  dropper: <><path d="M26 14L34 22 13 42 4 46 8 36Z" fill="#d5d8d5" stroke="#7f827f" strokeWidth="1.8" /><path d="M22 11L37 26" stroke="#4a5a48" strokeWidth="4" /><path d="M27 12L39 2q7 1 6 8L36 22Z" fill="#6f9f66" stroke="#4c7f44" /></>,
  hand: <path d="M17 44L6 29c-3-5 1-7 4-4l5 5-4-17c0-4 4-4 5-1l3 12L20 6c1-4 5-3 5 0l1 17 3-15c2-3 5-2 4 2l-1 16 5-9c2-3 6-1 4 3-1 10-2 17-8 24Z" fill="url(#paper)" stroke="#777" strokeWidth="2" />,
  zoomer: (
    <>
      <path d="M29 29L44 46" stroke="#c98a2c" strokeWidth="6" /><circle cx="20" cy="20" r="12" fill="url(#ice)" stroke="#a4b7cf" strokeWidth="3" /><path d="M20 0l5 5H15ZM20 42l-5-5H25ZM0 20l4-4v8ZM41 20l-4-4v8Z" fill="#1b43d8" />
    </>
  ),
  zoompage: (
    <>
      <rect x="5" y="8" width="34" height="30" fill="#e9f4ff" stroke="#1a78c8" strokeWidth="3" /><path d="M30 15H36M30 21H36" stroke="#1a78c8" strokeWidth="2" /><path d="M27 28L40 43" stroke="#e4a414" strokeWidth="8" /><circle cx="17" cy="18" r="12" fill="#a9dbfa" stroke="#3d9ce0" strokeWidth="2.4" />
    </>
  ),
  compare: (
    <>
      <rect x="7" y="6" width="31" height="36" fill="#bcd3ee" stroke="#7ba3cd" strokeWidth="2" /><path d="M10 11H24V24H14Z" fill="#a3332c" /><path d="M10 27H24V38H12Z" fill="#5c7d75" /><rect x="22" y="11" width="19" height="24" fill="#c9d8d5" stroke="#f0493c" strokeWidth="2.4" /><path d="M25 20L31 16 37 20 36 29 27 30Z" fill="#8f3b2c" /><path d="M24 29H39V33H24Z" fill="#4f7d45" />
    </>
  ),
  sheet: (
    <>
      <rect x="5" y="5" width="38" height="38" fill="#d9eafc" stroke="#2a62b8" strokeWidth="2.4" /><path d="M12 9H28L36 17V39H12Z" fill="url(#ice)" stroke="#4470ac" strokeWidth="2" /><path d="M28 9V17H36" fill="#9bb9e0" stroke="#4470ac" />
    </>
  ),
  grid: (
    <>
      <rect x="4" y="4" width="40" height="40" fill="#c9cfe2" stroke="#60648c" strokeWidth="2.4" />
      {[8, 20, 32].map((y) => <path key={y} d={`M9 ${y}H21V${y + 8}H9ZM27 ${y}H39V${y + 8}H27Z`} fill="#f2f4fa" stroke="#60648c" strokeWidth="2" />)}
    </>
  ),

  /* file toolbar */
  folder: <><path d="M6 12V40H45V12Z" fill="#000" /><path d="M3 9L7 5H17L21 9H41V36H3Z" fill="#f3f06c" stroke="#777" strokeWidth="3" /></>,
  folderedit: <><path d="M5 10L9 4H20L24 8H40V34H5Z" fill="#fadb84" stroke="#c9a24c" strokeWidth="2" /><path d="M30 34L42 13" stroke="#2a90e0" strokeWidth="5" /><rect x="4" y="35" width="39" height="8" fill="#0b37c8" /></>,
  folderdel: <><path d="M3 11L7 6H17L21 10H42V38H3Z" fill="#f3f06c" stroke="#666" strokeWidth="3" /><path d="M3 8L40 44M38 10L6 44" stroke="#f00" strokeWidth="5" /></>,
  foldersearch: <><path d="M3 9L7 4H17L21 8H44V36H3Z" fill="#f3f06c" stroke="#333" strokeWidth="2.4" /><circle cx="20" cy="22" r="9" fill="#9af0ff" stroke="#222" strokeWidth="2" /><path d="M28 29L42 44" stroke="#0b2ff0" strokeWidth="6" /></>,
  edit: <><rect x="4" y="12" width="38" height="32" rx="3" fill="#e3e8f3" stroke="#9aa5c0" strokeWidth="3" /><path d="M20 24H38M20 32H38M20 38H38" stroke="#6f7fa8" strokeWidth="2.4" /><circle cx="12" cy="24" r="3.500" fill="#e28a3d" /><circle cx="12" cy="35" r="3.500" fill="#e28a3d" /><path d="M17 22L36 3l8 3L24 25Z" fill="#f7b52c" stroke="#b37a10" /></>,
  refresh: <path d="M20 4C8 6 8 13 9 20H1L13 33 25 20H17C15 14 15 10 20 4ZM28 45c12-2 12-9 11-16H47L35 16 23 29h8c2 6 2 10-3 16Z" fill="#2f9428" />,
  delx: <path d="M5 5C16 13 27 24 43 44M42 5C30 14 18 26 6 44" fill="none" stroke="#f51010" strokeWidth="5.500" />,
  rename: <><rect x="4" y="8" width="36" height="34" fill="#fff" stroke="#0b0b66" strokeWidth="4" /><path d="M34 4H46M40 4V46M34 46H46" stroke="#0b0b66" strokeWidth="4" /><text x="14" y="33" fontFamily="DejaVu Sans, sans-serif" fontSize="24" fill="#000">a</text></>,
  copyto: <><path d="M2 3H18L24 9V30H2Z" fill="#eef" stroke="#8a90f0" strokeWidth="2.4" /><path d="M20 18H38L46 26V46H20Z" fill="#eaf6ff" stroke="#4f8fc0" strokeWidth="2.4" /><path d="M10 24L20 15 34 28V22H38V40H22L27 35Z" fill="#35b820" stroke="#1d7a10" strokeWidth="1.5" /></>,

  /* taskbar */
  winlogo: <path d="M8 13L21 11V23H8ZM23 11L40 8V23H23ZM8 25H21V37L8 35ZM23 25H40V40L23 37Z" fill="#fff" />,
  cortana: <circle cx="24" cy="24" r="14" fill="none" stroke="#fff" strokeWidth="3.500" />,
  taskview: <path d="M13 10H35V38H13ZM9 14H4V34H9M39 14H44V34H39" fill="none" stroke="#fff" strokeWidth="2.2" />,
  outlook: <><path d="M24 14H44V34H24Z" fill="#fff" stroke="#1479c9" /><path d="M26 17L34 25 43 16" fill="none" stroke="#1479c9" strokeWidth="2.500" /><path d="M3 7L28 3V45L3 40Z" fill="#0f6fc0" /><circle cx="15" cy="24" r="6" fill="none" stroke="#fff" strokeWidth="3.500" /></>,
  gee: <path d="M46 0L44 12 30 14 18 24 16 34 28 35 32 28H24L27 21H44L42 47H8L2 40 3 23 14 9 28 5Z" fill="#e02018" />,
  paintapp: <><path d="M22 12C36 8 46 18 44 30 42 42 30 48 24 46 18 44 24 36 18 34 12 34 8 44 3 36 0 26 10 14 22 12Z" fill="#cfe0f2" stroke="#8aa6c4" /><circle cx="17" cy="20" r="4" fill="#3e7fe0" /><circle cx="10" cy="29" r="3.500" fill="#e83a2c" /><circle cx="25" cy="18" r="4" fill="#4dbd3a" /><circle cx="33" cy="24" r="4" fill="#f5a623" /><path d="M39 8L26 46" stroke="#d4832a" strokeWidth="3.500" /><path d="M34 2h8l2 8-6 2Z" fill="#b48560" /></>,
  paletteapp: <><circle cx="24" cy="24" r="23" fill="url(#gold)" /><circle cx="24" cy="9" r="5" fill="#2f88dd" /><circle cx="12" cy="16" r="5" fill="#3fb335" /><circle cx="10" cy="28" r="5" fill="#ea3a2a" /><ellipse cx="26" cy="37" rx="4" ry="5" fill="#3a1d08" /></>,
  explorer: <><path d="M3 8H20L23 12H45V40H3Z" fill="#ffe28a" /><path d="M3 8H20L23 12H3Z" fill="#f2c14c" /><path d="M10 42V25H38V42H30V33H18V42Z" fill="#38b3ea" /></>,
  music: <><circle cx="24" cy="24" r="23" fill="#f8cf12" /><path d="M26 2C27 10 34 8 33 14L26 15 29 32c3 12-13 15-15 6-1-6 6-10 11-7L20 13Z" fill="#1fb566" /></>,
  ie: <><path d="M24 7c12 0 20 9 19 20H18c1 8 11 9 14 3h10C38 41 30 45 23 44 11 43 5 34 6 25 7 14 14 7 24 7Zm-6 14H32C31 13 19 13 18 21Z" fill="#5ccaf7" /><path d="M4 44C0 34 12 16 30 6c9-5 16-4 14 5" fill="none" stroke="#f4bd2c" strokeWidth="3.500" /></>,
  qbrowser: <><circle cx="24" cy="24" r="18" fill="none" stroke="#1596f5" strokeWidth="11" /><path d="M22 47c-3-8 4-11 7-10 3-8 14-6 13 2 5 2 4 8 1 8Z" fill="#fff" /></>,
  perf: <><ellipse cx="28" cy="41" rx="12" ry="6" fill="#b9bdc1" /><path d="M2 8L10 5V34L4 31Z" fill="#8f959b" /><path d="M9 4L46 8V36L11 34Z" fill="#cdd2d6" stroke="#9ba1a6" /><path d="M13 9L42 12V32L14 30Z" fill="#f6fbff" stroke="#aac4dc" /><path d="M15 24h4l3-9 3 12 4-11 3 10 3-4h5" fill="none" stroke="#3a7dbc" strokeWidth="2" /></>,
  ding: <><circle cx="24" cy="24" r="23" fill="#2f96ee" /><path d="M10 9C20 14 32 15 38 21L34 29H38L26 43 28 33H22C16 27 12 19 10 9Z" fill="#fff" /></>,
  wechat: <><ellipse cx="19" cy="19" rx="17" ry="15" fill="#84dc4c" /><path d="M8 30L6 38 16 33Z" fill="#84dc4c" /><circle cx="13" cy="15" r="2.200" fill="#2c6c10" /><circle cx="25" cy="15" r="2.200" fill="#2c6c10" /><ellipse cx="33" cy="31" rx="14" ry="12" fill="#f2f2f2" /><path d="M38 41L44 46 43 37Z" fill="#f2f2f2" /><circle cx="29" cy="28" r="1.800" fill="#777" /><circle cx="38" cy="28" r="1.800" fill="#777" /></>,
  hamster: <><circle cx="24" cy="24" r="23" fill="#2b3a66" /><path d="M16 8C24-2 40 2 44 14 48 28 38 46 25 47 12 46 8 36 10 26Z" fill="#f3e9df" /><path d="M28 2C40 2 47 12 45 22L38 22 31 12Z" fill="#7a3d1c" /><circle cx="34" cy="16" r="2.500" fill="#1c120c" /><ellipse cx="20" cy="24" rx="4" ry="3" fill="#d9a796" /><path d="M15 36c5-6 13-5 18 1L27 46 18 44Z" fill="#8c6a50" /></>,
  dolphin: <><rect width="48" height="48" fill="url(#logo)" /><path d="M0 48V36C12 26 26 24 38 32 44 36 46 42 48 48Z" fill="#0d74c0" /><path d="M0 32C8 26 13 20 18 15L21 11 25 15C36 18 44 28 48 42 38 30 24 24 10 28Z" fill="#fff" /></>,
  shortcut: <><rect width="48" height="48" fill="url(#logo)" /><path d="M0 48V36C12 26 26 24 38 32 44 36 46 42 48 48Z" fill="#0d74c0" /><path d="M0 32C8 26 13 20 18 15L21 11 25 15C36 18 44 28 48 42 38 30 24 24 10 28Z" fill="#fff" /><rect x="0" y="29" width="19" height="19" fill="#eef4fb" /><path d="M5 44C4 38 7 36 11 36M8 32H15V39Z" fill="#1f5fae" stroke="#1f5fae" strokeWidth="2.500" /></>,

  /* tray */
  caret: <path d="M8 32L24 16 40 32" fill="none" stroke="#fff" strokeWidth="3" />,
  star: <><path d="M24 1L30 17 46 18 34 29 39 46 24 37 9 46 14 29 2 18 18 17Z" fill="#f7b92c" stroke="#d98407" strokeWidth="2" /><circle cx="24" cy="30" r="5" fill="#e02a1f" /><circle cx="20" cy="21" r="1.600" /><circle cx="28" cy="21" r="1.600" /></>,
  penguin: <><ellipse cx="20" cy="26" rx="14" ry="18" fill="#111" stroke="#555" /><ellipse cx="20" cy="30" rx="9" ry="12" fill="#fff" /><circle cx="16" cy="13" r="2.500" fill="#fff" /><circle cx="24" cy="13" r="2.500" fill="#fff" /><path d="M8 22H32V28H8Z" fill="#e8261c" /><path d="M14 17H26L20 21Z" fill="#f7a700" /><path d="M6 44h12M22 44h12" stroke="#f7a700" strokeWidth="5" /><circle cx="34" cy="32" r="12" fill="#f58a4c" /><path d="M28 29h12M28 35h12" stroke="#fff" strokeWidth="2" /></>,
  battery: <path d="M20 16H42V38H12V30M42 23H46V31H42M3 13H17V20Q17 26 10 26T3 20ZM6 12V6M14 12V6M10 26V38" fill="none" stroke="#fff" strokeWidth="3" />,
  wifi: <><path d="M8 44C8 22 20 8 40 6M16 44C16 28 24 18 40 16M25 44C25 34 30 27 40 26" fill="none" stroke="#ddd" strokeWidth="3" /><circle cx="37" cy="40" r="5" fill="#fff" /></>,
  volume: <><path d="M4 18H12L22 8V40L12 30H4Z" fill="none" stroke="#fff" strokeWidth="3" /><path d="M28 17q5 7 0 14" fill="none" stroke="#fff" strokeWidth="3" /><path d="M34 11q9 13 0 26M40 6q13 18 0 36" fill="none" stroke="#666" strokeWidth="3" /></>,
  sogou: <><path d="M4 6L42 2 46 40 38 46 4 46Z" fill="#ee4a23" transform="rotate(-3 24 24)" /><path d="M36 13C26 9 14 11 14 18S34 22 34 30 20 39 12 34" fill="none" stroke="#fff" strokeWidth="6" /></>,
  notify: <path d="M6 6H42V36H30L24 44 18 36H6Z" fill="none" stroke="#fff" strokeWidth="3" />,
};

const Icon = ({ name, size = 48 }: { name: string; size?: number }) => (
  <svg width={size} height={size} viewBox="0 0 48 48" aria-hidden="true">{art[name]}</svg>
);

const FolderIcon = () => (
  <svg width="26" height="32" viewBox="0 0 26 32" aria-hidden="true">
    <path d="M1 1H24V19H25V31H1Z" fill="#ffe58f" stroke="#e8bf3c" strokeWidth="2" /><path d="M20 31V21H24" fill="none" stroke="#e8bf3c" strokeWidth="2" />
  </svg>
);

const TifIcon = () => (
  <svg width="32" height="32" viewBox="0 0 32 32" aria-hidden="true">
    <rect width="32" height="32" fill="#ebe7d3" /><path d="M9 1H26L31 6V31H9Z" fill="#fff" stroke="#000" strokeWidth="2" /><path d="M26 1V6H31" fill="none" stroke="#000" strokeWidth="2" />
    <rect x="0" y="8" width="31" height="16" fill="#000099" stroke="#000" strokeWidth="2" />
    <text x="3" y="21" fontFamily="DejaVu Sans Mono, monospace" fontWeight="700" fontSize="14" fill="#fff">TIF</text>
  </svg>
);

const StatusIcon = () => (
  <svg width="24" height="28" viewBox="0 0 24 28" aria-hidden="true"><rect x="1" y="1" width="22" height="26" fill="#3b93e3" stroke="#1c5fb0" strokeWidth="2" /><rect x="5" y="4" width="14" height="20" fill="#e9f5ff" /><path d="M8 8H16M8 12H16M8 16H16M8 20H16" stroke="#2a7fd0" strokeWidth="2" /></svg>
);

/* ---------- data ---------- */

type Tool = { icon: string; label: string; drop?: boolean; off?: boolean };

const topTools: Tool[] = [
  { icon: "rotate", label: "旋转", drop: true }, { icon: "deskew", label: "纠斜", drop: true }, { icon: "boxin", label: "框内", drop: true },
  { icon: "boxout", label: "框外", drop: true }, { icon: "region", label: "区域", drop: true }, { icon: "center", label: "居中", drop: true },
  { icon: "crop", label: "裁剪", drop: true }, { icon: "patch", label: "补边" }, { icon: "blackedge", label: "黑边", drop: true, off: true },
  { icon: "noise", label: "噪点", drop: true, off: true }, { icon: "text", label: "文字", drop: true }, { icon: "adjust", label: "调整", drop: true },
  { icon: "deepen", label: "加深", drop: true }, { icon: "bg", label: "背景", drop: true }, { icon: "red", label: "标红", drop: true },
  { icon: "page", label: "幅面", drop: true }, { icon: "fix", label: "修补", drop: true }, { icon: "clone", label: "克隆", drop: true },
  { icon: "paint", label: "绘制" }, { icon: "note", label: "签注", drop: true }, { icon: "stamp", label: "签章", drop: true },
  { icon: "binary", label: "二值", drop: true },
];

const sideTools: Tool[] = [
  { icon: "rotate", label: "旋转", drop: true }, { icon: "flip", label: "翻转", drop: true },
  { icon: "deskew", label: "纠斜", drop: true }, { icon: "center", label: "居中", drop: true },
  { icon: "boxin", label: "框内", drop: true }, { icon: "region", label: "区域", drop: true },
  { icon: "boxout", label: "框外", drop: true }, { icon: "patch", label: "补边" },
  { icon: "crop", label: "裁剪", drop: true }, { icon: "lines", label: "线条", drop: true, off: true },
  { icon: "blackedge", label: "黑边", drop: true, off: true }, { icon: "noise", label: "噪点", drop: true, off: true },
  { icon: "punch", label: "订孔", drop: true, off: true }, { icon: "white", label: "反白", drop: true, off: true },
  { icon: "invert", label: "反色", drop: true }, { icon: "text", label: "文字", drop: true },
  { icon: "adjust", label: "调整", drop: true }, { icon: "red", label: "标红", drop: true },
  { icon: "deepen", label: "加深", drop: true }, { icon: "bg", label: "背景", drop: true },
  { icon: "sizepm", label: "大小", drop: true }, { icon: "page", label: "幅面", drop: true },
  { icon: "fix", label: "修补", drop: true }, { icon: "clone", label: "克隆", drop: true },
  { icon: "paint", label: "绘制" }, { icon: "blank", label: "白页", drop: true },
  { icon: "note", label: "签注", drop: true }, { icon: "stamp", label: "签章", drop: true },
  { icon: "binary", label: "二值", drop: true }, { icon: "dpi", label: "DPI", drop: true },
  { icon: "order", label: "调序", drop: true }, { icon: "remove", label: "删除", drop: true },
  { icon: "join", label: "拼接" }, { icon: "split", label: "分割", drop: true },
];

const treeRows: { guides: string; name: string; cjk?: boolean; selected?: boolean }[] = [
  { guides: "vv-", name: "irealer" },
  { guides: "vvv+", name: "dis9" },
  { guides: "vvv-", name: "dis10" },
  { guides: "vvvv-", name: "Images" },
  { guides: "vvvvvt", name: "Sample1", selected: true },
  { guides: "vvvvvl", name: "Sample2" },
  { guides: "vvvvt", name: "Logs" },
  { guides: "vvvv+", name: "OCR" },
  { guides: "vvvvt", name: "Temp" },
  { guides: "vvvvl", name: "视频讲解", cjk: true },
  { guides: "vvvt", name: "Logs" },
  { guides: "vvv+", name: "批量分件合并转换", cjk: true },
];

const files = [
  ["0001.tif", "208K"], ["0002.tif", "27K"], ["0003.tif", "25K"],
  ["0004.tif", "10K"], ["0005.tif", "26K"], ["0006.tif", "274K"],
];

/* Line prefixes: ">" indents, "#" is a bold section head, "=" spans the full measure. */
const pageOne = [
  "=各区、县统计局，市属各委、办、局、总公司（集团、控股）",
  "及中央在京各综合单位：",
  ">=根据《北京市统计管理条例》、《北京市统计人员持证上岗",
  "=管理办法》及其实施细则的有关规定，现决定于 2002 年 11 月",
  "=至 2003 年 5 月，组织对全市专兼职统计人员持有的《统计证》",
  "进行验证。现将验证工作具体事项通知如下：",
  ">#一、验证的组织",
  ">=北京市统计局统一组织全市的验证工作。各区、县统计局、",
  "=市属各委、办、局、总公司（集团、控股）及中央在京各综合",
  "=单位具体组织实施。凡专兼职统计人员持有国家统计局统一印",
];

const pageTwo = [
  "=制的《统计证》，一律参加所在地区或者部门具体组织的验证工",
  "=作。无主管单位和无单位统计人员持有的《统计证》，到原发证",
  "机关验证。",
  ">=北京市统计局将在 11 月中旬召开会议，部署《统计证》验",
  "证工作。",
  ">#二、验证的条件",
  ">=凡专兼职统计人员持有国家统计局统一印制的《统计证》，",
  "=参加过统计继续教育，未发生重大违反统计法律、法规行为的，",
  "予以验证。",
  ">#三、验证的期限",
  ">=2002 年 12 月 1 日起至 2003 年 5 月 31 日止为全市《统计",
  "=证》验证时间，凡超过全市统一规定的验证时间不验证的，《统",
  "计证》无效。",
  ">=北京市统计局将于 11 月中下旬在北京日报、北京晚报刊登",
  "《统计证》验证公告。",
  ">#四、验证的办法",
  ">=1、区县的乡镇、街道以及区县属委、办、局、公司，将所",
  "=属单位持有《统计证》人员的《统计证》和《北京市统计人员",
  "=继续教育证书》收回，按照全市统一的验证登记表式登记造册，",
  "=持《统计证》、《北京市统计人员继续教育证书》和登记造册表，",
  "=到区县统计局集中验证。各区、县统计局代行市统计局的验证",
  "=职权，凡符合条件的，在《统计证》的年检情况记录栏加盖北",
];

const pageThree = [
  "=京市统计局《统计证》验证合格章，并将登记造册表报市统计",
  "局法规处。",
  ">=2、市属各委、办、局、总公司（集团、控股），中央在京",
  "=各综合单位，将所属单位持有《统计证》人员的《统计证》和",
  "=《北京市统计人员继续教育证书》收回，按照全市统一的验证",
  "=登记表式登记造册，持《统计证》、《北京市统计人员继续教育",
  "证书》和登记造册表，到市统计局集中验证。",
  ">=五、《统计证》验证不收费，任何单位不得以验证名义收取",
  "任何费用。",
  ">=验证结束后，各区、县统计局，市属各委、办、局、总公",
  "=司（集团、控股）及中央在京各综合单位，对本地区、本部门",
  "=的组织验证工作的经验、存在问题等进行认真总结，并于 2003",
  "=年 6 月 20 日前报市统计局法规处。各区、县统计局于 2003 年",
  "6 月底前将验证专用章交回市统计局法规处。",
];

const Lines = ({ rows }: { rows: string[] }) => (
  <>
    {rows.map((row, i) => (
      <Line key={i} $indent={row.startsWith(">")} $bold={row.includes("#")} $full={row.includes("=")}>
        {row.replace(/^[>=#]+/, "")}
      </Line>
    ))}
  </>
);

const Frame = ({ n, active, children }: { n: number; active?: boolean; children: React.ReactNode }) => (
  <Thumb>
    <ThumbStage>{children}</ThumbStage>
    <ThumbCaption $active={active}>
      <ThumbLabel><ThumbCheck type="checkbox" />{n}</ThumbLabel>
    </ThumbCaption>
  </Thumb>
);

const Drop = ({ of, off }: { of: string; off?: boolean }) => (
  <DropButton aria-label={`${of} 选项`} disabled={off}><ArrowMark off={off} /></DropButton>
);

const Button = ({ icon, label, drop, off, pressed, size }: { icon: string; label: string; drop?: boolean; off?: boolean; pressed?: boolean; size?: number }) => (
  <>
    <ToolButton aria-label={label} aria-pressed={pressed} disabled={off}><Icon name={icon} size={size} /></ToolButton>
    {drop && <Drop of={label} off={off} />}
  </>
);

const FileTool = ({ icon, label, drop }: { icon: string; label: string; drop?: boolean }) => (
  <>
    <FileButton $w={44} aria-label={label}><Icon name={icon} size={32} /></FileButton>
    {drop && <Drop of={label} />}
  </>
);

const tasks: [string, string, boolean][] = [
  ["winlogo", "开始", false], ["cortana", "搜索", false], ["taskview", "任务视图", false], ["outlook", "Outlook", false],
  ["gee", "G", false], ["paintapp", "画图", false], ["paletteapp", "调色板", false], ["explorer", "文件资源管理器", true],
  ["music", "音乐", false], ["ie", "Internet Explorer", false], ["qbrowser", "浏览器", true], ["perf", "性能", true],
  ["ding", "钉钉", true], ["wechat", "微信", true], ["hamster", "相片", true], ["shortcut", "快捷方式", true],
];

export default function App() {
  return (
    <Shell>
      <GlobalStyle />
      <Defs />
      <TitleBar>
        <Icon name="dolphin" size={32} />
        <Title>紫软档数字化加工处理系统1.0</Title>
        <CaptionButton aria-label="最小化"><svg width="20" height="20"><path d="M0 10H20" stroke="#000" strokeWidth="2" /></svg></CaptionButton>
        <CaptionButton aria-label="还原"><svg width="22" height="22" fill="none" stroke="#000" strokeWidth="2"><path d="M1 5H16V20H1ZM5 5V1H20V16H16" /></svg></CaptionButton>
        <CaptionButton aria-label="关闭"><svg width="20" height="20"><path d="M0 0L20 20M20 0L0 20" stroke="#000" strokeWidth="2" /></svg></CaptionButton>
      </TitleBar>

      <Main>
        <LeftPane>
          <ToolBar>
            <Button icon="scan" label="扫描" drop />
            <Button icon="windows" label="导入" drop />
            <Button icon="save" label="保存" size={44} />
            <Button icon="exporter" label="导出" drop />
            <Button icon="tools" label="工具" drop />
            <Button icon="list" label="列表" drop />
          </ToolBar>
          <TreeBox>
            <Tree>
              {treeRows.map((row, i) => (
                <TreeRow key={i}>
                  {row.guides.split("").map((g, j) => (
                    <Guide key={j} $kind={g}>
                      {(g === "+" || g === "-") && (
                        <Expander aria-label={g === "+" ? "展开" : "折叠"}>
                          <svg width="10" height="10"><path d={g === "+" ? "M0 5H10M5 0V10" : "M0 5H10"} stroke="#000" strokeWidth="2" /></svg>
                        </Expander>
                      )}
                    </Guide>
                  ))}
                  <FolderSlot><FolderIcon /></FolderSlot>
                  <NodeLabel $selected={row.selected} $cjk={row.cjk}>{row.name}</NodeLabel>
                </TreeRow>
              ))}
            </Tree>
            <ScrollTrack>
              <svg width="16" height="12" fill="none" stroke="#555" strokeWidth="3"><path d="M1 10L8 2 15 10" /></svg>
              <ScrollThumb />
              <svg width="16" height="12" fill="none" stroke="#555" strokeWidth="3"><path d="M1 2L8 10 15 2" /></svg>
            </ScrollTrack>
          </TreeBox>
          <TabStrip>
            <Tab $active $w={144}>浏览文件夹</Tab>
            <Tab $w={112}>分件列表</Tab>
            <TabCount>6</TabCount>
          </TabStrip>
          <FileBar>
            <FileTool icon="folder" label="文件夹" drop />
            <FileTool icon="folderedit" label="重命名文件夹" />
            <FileTool icon="folderdel" label="删除文件夹" />
            <FileTool icon="foldersearch" label="查找" />
            <FileDivider />
            <FileTool icon="edit" label="编辑" drop />
            <FileTool icon="refresh" label="刷新" />
            <FileTool icon="delx" label="删除" />
            <FileTool icon="rename" label="重命名" drop />
            <FileTool icon="copyto" label="复制到" drop />
            <FileMore aria-label="更多"><Chevrons /><ArrowMark /></FileMore>
          </FileBar>
          <FileBox>
            <FileTable>
              <thead><tr><HeadCell scope="col">文件名</HeadCell><HeadCell scope="col" $right>大小</HeadCell></tr></thead>
              <tbody>
                {files.map(([name, size], i) => (
                  <FileRow key={name} $selected={i === 0}>
                    <NameCell><FileLabel><FileCheck type="checkbox" /><TifIcon /><FileName>{name}</FileName></FileLabel></NameCell>
                    <SizeCell>{size}</SizeCell>
                  </FileRow>
                ))}
              </tbody>
            </FileTable>
          </FileBox>
        </LeftPane>

        <WorkPane>
          <ToolBar>
            <Button icon="first" label="首页" />
            <Button icon="prev" label="上一页" />
            <Combo $w={145}>
              <ComboSelect aria-label="页码" defaultValue="1/6"><option>1/6</option></ComboSelect>
              <ComboArrow><ArrowMark /></ComboArrow>
            </Combo>
            <Button icon="next" label="下一页" />
            <Button icon="last" label="末页" />
            <Divider />
            <Button icon="zin" label="放大" />
            <Combo $w={88}>
              <ComboSelect aria-label="缩放" defaultValue="12%"><option>12%</option></ComboSelect>
              <ComboArrow><ArrowMark /></ComboArrow>
            </Combo>
            <Button icon="zout" label="缩小" />
            <Divider />
            <Button icon="undo" label="撤销" />
            <Button icon="redo" label="重做" />
            <Divider />
            <Button icon="cut" label="剪切" />
            <Button icon="copy" label="复制" />
            <Button icon="copyall" label="全部复制" />
            <Button icon="paste" label="粘贴" />
            <Divider />
            <Button icon="ruler" label="标尺" />
            <Button icon="cross" label="十字线" drop />
            <Button icon="dashoff" label="选区" drop off />
            <Button icon="dashred" label="红色选区" drop />
            <Button icon="dropper" label="取色" drop />
            <Divider />
            <Button icon="hand" label="抓手" pressed />
            <Button icon="zoomer" label="局部放大" />
            <Button icon="zoompage" label="查看" />
            <Button icon="compare" label="对比" />
            <Divider />
            <Button icon="sheet" label="适合页面" drop />
            <Button icon="grid" label="缩略图" drop />
          </ToolBar>

          <BigBar>
            {topTools.map((t) => (
              <BigItem key={t.label}>
                <BigButton disabled={t.off}><Icon name={t.icon} />{t.label}</BigButton>
                {t.drop && <BigDrop aria-label={`${t.label} 选项`} disabled={t.off}><ArrowMark off={t.off} /></BigDrop>}
              </BigItem>
            ))}
            <More aria-label="更多工具"><Chevrons /><ArrowMark /></More>
          </BigBar>

          <Center>
            <Viewer>
              <Frame n={1} active>
                <Sheet $top={126}>
                  <RedTitle>北京市统计局文件</RedTitle>
                  <DocNumber>京统发〔2002〕148 号</DocNumber>
                  <DocHeading>关于开展 2002 年度《统计证》<br />验证工作的通知</DocHeading>
                  <Lines rows={pageOne} />
                  <PageNo>—1—</PageNo>
                </Sheet>
              </Frame>
              <Frame n={2}>
                <Sheet $top={75}>
                  <Lines rows={pageTwo} />
                  <PageNo $left>—2—</PageNo>
                </Sheet>
              </Frame>
              <Frame n={3}>
                <Sheet $top={78}>
                  <Lines rows={pageThree} />
                  <Attachment>附件：2002 年北京市《统计证》验证登记表</Attachment>
                  <Signed>
                    二〇〇二年十月二十八日
                    <Seal width="90" height="90" viewBox="0 0 90 90" fill="none" stroke="#888"><circle cx="45" cy="45" r="43" strokeDasharray="5 4 2 5 9 3" /><path d="M30 20h2M50 14h3M64 32l4-2M28 60l5-3M58 62l8-3M70 58l-6 5" /></Seal>
                  </Signed>
                  <Keywords><b>主题词：</b>统计　验证　通知</Keywords>
                  <Imprint><span>北京市统计局办公室</span><span>2002 年 10 月 29 日印发</span></Imprint>
                  <Copies>共印 400 份</Copies>
                  <PageNo>—3—</PageNo>
                </Sheet>
              </Frame>
              <Frame n={4}>
                <Sheet $top={30}>
                  <FormLabel>附件：</FormLabel>
                  <FormTitle>2002 年北京市《统计证》验证登记表</FormTitle>
                  <FormLine $end={44}><span>主管部门(盖章)</span><span>应验证人数</span><span>实验证人数</span></FormLine>
                  <FormTable>
                    <colgroup><col width="25" /><col width="100" /><col width="50" /><col width="70" /><col width="49" /></colgroup>
                    <thead><tr><th>序<br />号</th><th>单　　　位</th><th>姓名</th><th>统计证编号</th><th>是否<br />在岗</th></tr></thead>
                    <tbody>
                      {Array.from({ length: 17 }, (_, i) => <tr key={i}><td /><td /><td /><td /><td /></tr>)}
                    </tbody>
                  </FormTable>
                  <FormLine $end={8}><span>负责人：</span><span>填表人：</span><span>电话：</span><span>报送日期</span><span>年</span><span>月</span><span>日</span></FormLine>
                </Sheet>
              </Frame>
            </Viewer>

            <SidePanel>
              <ToolGrid>
                {sideTools.map((t) => (
                  <SideItem key={t.label}>
                    <SideButton disabled={t.off}><Icon name={t.icon} />{t.label}</SideButton>
                    {t.drop && <Drop of={t.label} off={t.off} />}
                  </SideItem>
                ))}
              </ToolGrid>
              <TabStrip $right>
                <Tab $w={112}>批量扫描</Tab>
                <Tab $active $w={121}>图像处理</Tab>
              </TabStrip>
            </SidePanel>
          </Center>

          <StatusBar>
            <StatusCell $cjk><StatusIcon />准备就绪</StatusCell>
            <StatusCell $w={236} $cjk>彩色图像 24位</StatusCell>
            <StatusCell $w={174}>200×200</StatusCell>
            <StatusCell $w={196}>1656×2338</StatusCell>
            <StatusCell $w={252}>JPEG</StatusCell>
            <StatusCell $w={260} $cjk>第1页 共6页</StatusCell>
          </StatusBar>
        </WorkPane>
      </Main>

      <TaskBar>
        {tasks.map(([icon, label, open]) => (
          <TaskButton key={label} $open={open} aria-label={label}><Icon name={icon} /></TaskButton>
        ))}
        <TaskButton $active aria-label="紫软档数字化加工处理系统"><Icon name="dolphin" /></TaskButton>
        <Tray>
          <TrayButton aria-label="显示隐藏的图标"><Icon name="caret" size={32} /></TrayButton>
          <TrayButton aria-label="收藏"><Icon name="star" size={32} /></TrayButton>
          <TrayButton aria-label="微信"><Icon name="wechat" size={32} /></TrayButton>
          <TrayButton aria-label="钉钉"><Icon name="ding" size={32} /></TrayButton>
          <TrayButton aria-label="QQ"><Icon name="penguin" size={32} /></TrayButton>
          <TrayButton aria-label="电源"><Icon name="battery" size={32} /></TrayButton>
          <TrayButton aria-label="网络"><Icon name="wifi" size={32} /></TrayButton>
          <TrayButton aria-label="音量"><Icon name="volume" size={32} /></TrayButton>
          <TrayText $w={56}>中</TrayText>
          <TrayButton aria-label="输入法"><Icon name="sogou" size={32} /></TrayButton>
          <TrayText $w={100}>云<br />度33℃</TrayText>
          <TrayText $w={174} $right>2017-06-19<br />五月廿五 周</TrayText>
          <TrayButton aria-label="通知"><Icon name="notify" size={40} /></TrayButton>
          <ShowDesktop />
        </Tray>
      </TaskBar>
    </Shell>
  );
}
